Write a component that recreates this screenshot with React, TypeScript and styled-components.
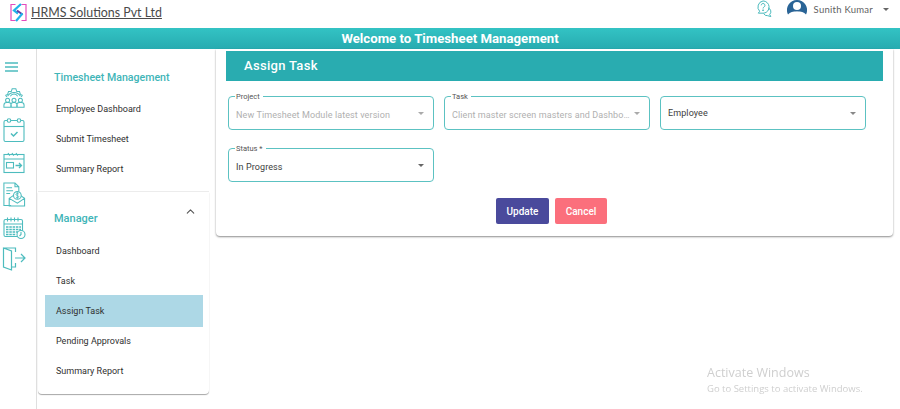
import React from "react";
import styled, { createGlobalStyle } from "styled-components";
import { ChevronUp } from "lucide-react";

const teal = "#3fb5b8";

const GlobalStyle = createGlobalStyle`
  html, body {
    margin: 0;
    padding: 0;
    background: #fff;
    font-family: Roboto, "Liberation Sans", sans-serif;
    overflow: hidden;
  }
`;

const Page = styled.div`
  width: 900px;
  height: 409px;
  display: flex;
  flex-direction: column;
  overflow: hidden;
`;

const Header = styled.header`
  height: 27px;
  display: flex;
  align-items: center;
  padding: 0 11px 2px 10px;
  box-sizing: border-box;
`;

const Brand = styled.a`
  margin-left: 4px;
  font-family: Lato, "Open Sans", sans-serif;
  font-size: 12.4px;
  color: #4a4a4a;
  text-decoration: underline;
`;

const HeaderRight = styled.div`
  margin-left: auto;
  align-self: flex-start;
  height: 18px;
  display: flex;
  align-items: center;
`;

const UserName = styled.span`
  margin: 0 10px 0 7px;
  font-family: Lato, "Open Sans", sans-serif;
  font-size: 9.5px;
  letter-spacing: 0.25px;
  color: #5f5f5f;
`;

const Caret = styled.span<{ $color?: string }>`
  width: 0;
  height: 0;
  flex-shrink: 0;
  border-left: 3.5px solid transparent;
  border-right: 3.5px solid transparent;
  border-top: 3.5px solid ${(p) => p.$color || "#666"};
`;

const Banner = styled.div`
  height: 21px;
  margin-top: 1px;
  background: linear-gradient(180deg, #33c3c4, #27abb0);
  color: #fff;
  font-size: 13.2px;
  font-weight: 700;
  display: flex;
  align-items: center;
  justify-content: center;
`;

const Body = styled.div`
  flex: 1;
  display: flex;
  min-height: 0;
`;

const Rail = styled.nav`
  width: 36px;
  border-right: 1px solid #dfdfdf;
  display: flex;
  flex-direction: column;
  align-items: center;
  padding: 13px 0 0 0;
  flex-shrink: 0;
`;

const RailIcon = styled.svg<{ $top?: number; $left?: number }>`
  display: block;
  flex-shrink: 0;
  fill: none;
  stroke: #4dbcbe;
  stroke-width: 1.1;
  margin-top: ${(p) => p.$top || 0}px;
  margin-left: ${(p) => p.$left ?? -8}px;
`;

const Sidebar = styled.aside`
  width: 171px;
  margin-left: 1px;
  flex-shrink: 0;
  display: flex;
  flex-direction: column;
`;

const SideSection = styled.section`
  padding-top: 21px;
  height: 143px;
  box-sizing: border-box;
  border-bottom: 1px solid #ececec;
  &:last-child {
    padding-top: 19px;
    height: 202px;
    border-bottom: 0;
    border-radius: 0 0 4px 4px;
    box-shadow: 0 1px 1px rgba(0, 0, 0, 0.35);
  }
`;

const SideHeading = styled.div`
  position: relative;
  height: 16px;
  padding-left: 16px;
  color: ${teal};
  font-size: 10.6px;
  font-weight: 500;
  line-height: 16px;
`;

const ManagerHeading = styled(SideHeading)`
  font-size: 11px;
  margin-bottom: 5px;
`;

const Expand = styled.span`
  position: absolute;
  right: 12px;
  top: -6px;
  color: #555;
  display: flex;
`;

const SideItem = styled.div<{ $active?: boolean }>`
  height: 32px;
  margin: -2px 6px 0 7px;
  padding-left: 11px;
  display: flex;
  align-items: center;
  font-size: 9px;
  color: #2f2f2f;
  background: ${(p) => (p.$active ? "#add8e6" : "transparent")};
`;

const SideList = styled.div<{ $top: number }>`
  margin-top: ${(p) => p.$top}px;
`;

const Main = styled.main`
  width: 677px;
  height: 187px;
  margin: 0 0 0 7px;
  padding: 2px 10px 0;
  box-sizing: border-box;
  border-radius: 0 0 4px 4px;
  box-shadow: 0 1px 2px rgba(0, 0, 0, 0.45);
  display: flex;
  flex-direction: column;
`;

const TitleBar = styled.h1`
  margin: 0;
  height: 30px;
  padding-left: 18px;
  background: #29acb0;
  color: #fff;
  font-size: 13px;
  font-weight: 500;
  letter-spacing: 0.3px;
  line-height: 30px;
`;

const FormGrid = styled.div`
  margin: 15px 2px 0;
  display: grid;
  grid-template-columns: repeat(3, 206px);
  column-gap: 10px;
  row-gap: 18px;
`;

const Field = styled.div`
  position: relative;
  height: 34px;
  box-sizing: border-box;
  border: 1px solid #5cc2c2;
  border-radius: 4px;
  display: flex;
  align-items: center;
  gap: 3px;
  padding: 0 9px 0 7px;
`;

const FloatLabel = styled.label`
  position: absolute;
  left: 6px;
  top: -5px;
  padding: 0 3px 0 1px;
  background: #fff;
  font-size: 7.5px;
  line-height: 9px;
  color: #555;
`;

const Value = styled.span<{ $muted?: boolean; $labeled?: boolean }>`
  flex: 1;
  min-width: 0;
  margin-top: ${(p) => (p.$labeled ? "3px" : "0")};
  white-space: nowrap;
  overflow: hidden;
  text-overflow: ellipsis;
  font-size: 9px;
  letter-spacing: 0.1px;
  color: ${(p) => (p.$muted ? "#b0b0b0" : "#3d3d3d")};
`;

const Actions = styled.div`
  margin-top: 16px;
  padding-right: 6px;
  display: flex;
  justify-content: center;
  gap: 6px;
`;

const Button = styled.button<{ $bg: string; $width: number }>`
  width: ${(p) => p.$width}px;
  height: 26px;
  padding: 0;
  border: 0;
  border-radius: 2px;
  background: ${(p) => p.$bg};
  color: #fff;
  font-family: Roboto, sans-serif;
  font-size: 10px;
  font-weight: 500;
`;

const Watermark = styled.div`
  position: fixed;
  left: 707px;
  top: 365px;
  font-family: "Open Sans", sans-serif;
  color: #cfcfcf;
  font-size: 9.5px;
  line-height: 15px;
  strong {
    display: block;
    font-size: 12.5px;
    font-weight: 400;
    line-height: 16px;
  }
`;

const HelpGap = styled.span`
  width: 14px;
`;

const AvatarSvg = styled.svg`
  margin-bottom: 3px;
`;

function Logo() {
  return (
    <svg width="17" height="19" viewBox="0 0 17 19" fill="none">
      <path d="M5.500 1.500H1v16h4.500M11.500 1.500H16v16h-4.500" stroke="#e54bbd" strokeWidth="1.200" />
      <path d="M11 1 L4 7.500 L8 10.500" stroke="#1fb2ea" strokeWidth="2.200" />
      <path d="M7 7.500 L12.500 11.500" stroke="#5b3fa8" strokeWidth="2" />
      <path d="M12.500 10.500 L6 18" stroke="#1fb2ea" strokeWidth="2.200" />
    </svg>
  );
}

function HelpChat() {
  return (
    <svg width="18" height="18" viewBox="0 0 18 19" fill="none" stroke={teal} strokeWidth="1">
      <path d="M8 1a6.500 6.500 0 0 1 1 12.900H3l1.400-2A6.500 6.500 0 0 1 8 1z" />
      <path d="M13.500 8.500a4 4 0 0 1 1.500 6.700l1.200 2.300-3.500-1a4 4 0 0 1-4-2" />
      <path d="M6 5.600a2 2 0 1 1 3 1.800c-.7.400-1 .800-1 1.600" />
      <circle cx="8" cy="10.800" r=".5" fill={teal} />
    </svg>
  );
}

function Avatar() {
  return (
    <AvatarSvg width="20" height="15" viewBox="0 0 20 15">
      <path d="M10 0a10 10 0 0 1 9 14.500C17 12 14 11.500 10 11.500S3 12 1 14.500A10 10 0 0 1 10 0z" fill="#2a6496" />
      <circle cx="10" cy="6" r="4" fill="#fff" />
      <path d="M3.500 15c2-2.600 4-3.200 6.500-3.200s4.500.6 6.500 3.200z" fill="#fff" />
    </AvatarSvg>
  );
}

function RailIcons() {
  return (
    <>
      <RailIcon width="13" height="10" viewBox="0 0 13 10" $left={-14}>
        <path d="M0 1h13M0 5h13M0 9h13" strokeWidth="1.300" />
      </RailIcon>
      <RailIcon width="24" height="22" viewBox="0 0 24 24" $top={15}>
        <path d="M5 10a8 8 0 0 1 14 0M8 10a4.500 4.500 0 0 1 8 0M4 11l-1-2 2-1 1-3 3 0 1-3h4l1 3 3 0 1 3 2 1-1 2" />
        <circle cx="5" cy="14.500" r="2.200" />
        <circle cx="12" cy="14.500" r="2.200" />
        <circle cx="19" cy="14.500" r="2.200" />
        <path d="M1 22v-2a3 3 0 0 1 3-3h2a3 3 0 0 1 3 3v2zM8.500 22v-2a3 3 0 0 1 3-3h1a3 3 0 0 1 3 3v2zM15 22v-2a3 3 0 0 1 3-3h2a3 3 0 0 1 3 3v2z" />
      </RailIcon>
      <RailIcon width="22" height="26" viewBox="0 0 22 25" $top={8}>
        <rect x="1" y="3" width="20" height="21" rx="1.500" />
        <path d="M1 9h20" />
        <circle cx="6" cy="3" r="1.800" fill="#fff" />
        <circle cx="16" cy="3" r="1.800" fill="#fff" />
        <path d="M8 16l2.500 2.500L14.500 14.500" strokeWidth="1.500" />
      </RailIcon>
      <RailIcon width="22" height="23" viewBox="0 0 22 22" $top={8}>
        <rect x="1" y="3" width="20" height="18" />
        <path d="M1 7.500h20M5 1.500c1 2 1 2 2 2.500M9 1.500c1 2 1 2 2 2.500M13 1.500c1 2 1 2 2 2.500" />
        <rect x="3.500" y="11" width="7" height="5.500" />
        <path d="M12.500 14h6M16 11.500l2.500 2.500-2.500 2.500" strokeWidth="1.300" />
      </RailIcon>
      <RailIcon width="24" height="25" viewBox="0 0 24 26" $top={8}>
        <path d="M9 24.500H1.500V1H13l4 4v5M13 1v4h4" />
        <path d="M4 6h6M4 9h7M4 12h4" />
        <path d="M7 17l8-5.500 8 5.500v8H7zM7 17l8.500 5 7.500-5" />
        <circle cx="15.500" cy="14" r="4" fill="#fff" />
        <path d="M17 12.500c-1-1-3-.7-3 .5s3 1 3 2.200-2 1.500-3 .5M15.500 10.500v7" strokeWidth=".9" />
      </RailIcon>
      <RailIcon width="23" height="24" viewBox="0 0 23 23" $top={9}>
        <rect x="1" y="3" width="18.500" height="17" rx="1.500" />
        <path d="M1 7.500h18.500M4.500 1v4M8 1v4M11.500 1v4M15 1v4" />
        <path d="M3 10.500h15M3 13h15M3 15.500h12M3 18h10" strokeDasharray="2.500 .8" strokeWidth="1.600" />
        <circle cx="18" cy="18" r="4" fill="#fff" />
        <path d="M18 15.500V18l-1.500 1.500" />
      </RailIcon>
      <RailIcon width="24" height="25" viewBox="0 0 24 25" $top={6}>
        <path d="M1.500 2h12v4M13.500 17v4h-4M1.500 2l8 3v19l-8-3z" strokeWidth="1.200" />
        <path d="M13 12h10M19 8l4 4-4 4" strokeWidth="1.200" />
      </RailIcon>
    </>
  );
}

export default function App() {
  return (
    <Page>
      <GlobalStyle />
      <Header>
        <Logo />
        <Brand>HRMS Solutions Pvt Ltd</Brand>
        <HeaderRight>
          <HelpChat />
          <HelpGap />
          <Avatar />
          <UserName>Sunith Kumar</UserName>
          <Caret />
        </HeaderRight>
      </Header>
      <Banner>Welcome to Timesheet Management</Banner>
      <Body>
        <Rail>
          <RailIcons />
        </Rail>
        <Sidebar>
          <SideSection>
            <SideHeading>Timesheet Management</SideHeading>
            <SideList $top={9}>
              <SideItem>Employee Dashboard</SideItem>
              <SideItem>Submit Timesheet</SideItem>
              <SideItem>Summary Report</SideItem>
            </SideList>
          </SideSection>
          <SideSection>
            <ManagerHeading>
              Manager
              <Expand>
                <ChevronUp size={13} strokeWidth={2} />
              </Expand>
            </ManagerHeading>
            <SideList $top={10}>
              <SideItem>Dashboard</SideItem>
              <SideItem>Task</SideItem>
              <SideItem $active>Assign Task</SideItem>
              <SideItem>Pending Approvals</SideItem>
              <SideItem>Summary Report</SideItem>
            </SideList>
          </SideSection>
        </Sidebar>
        <Main>
          <TitleBar>Assign Task</TitleBar>
          <FormGrid>
            <Field>
              <FloatLabel>Project</FloatLabel>
              <Value $muted $labeled>New Timesheet Module latest version</Value>
              <Caret $color="#aaa" />
            </Field>
            <Field>
              <FloatLabel>Task</FloatLabel>
              <Value $muted $labeled>Client master screen masters and Dashboard</Value>
              <Caret $color="#aaa" />
            </Field>
            <Field>
              <Value>Employee</Value>
              <Caret $color="#888" />
            </Field>
            <Field>
              <FloatLabel>Status *</FloatLabel>
              <Value $labeled>In Progress</Value>
              <Caret $color="#666" />
            </Field>
          </FormGrid>
          <Actions>
            <Button $bg="#4a4a9c" $width={53}>Update</Button>
            <Button $bg="#fb6f7c" $width={52}>Cancel</Button>
          </Actions>
        </Main>
      </Body>
      <Watermark>
        <strong>Activate Windows</strong>
        Go to Settings to activate Windows.
      </Watermark>
    </Page>
  );
}
